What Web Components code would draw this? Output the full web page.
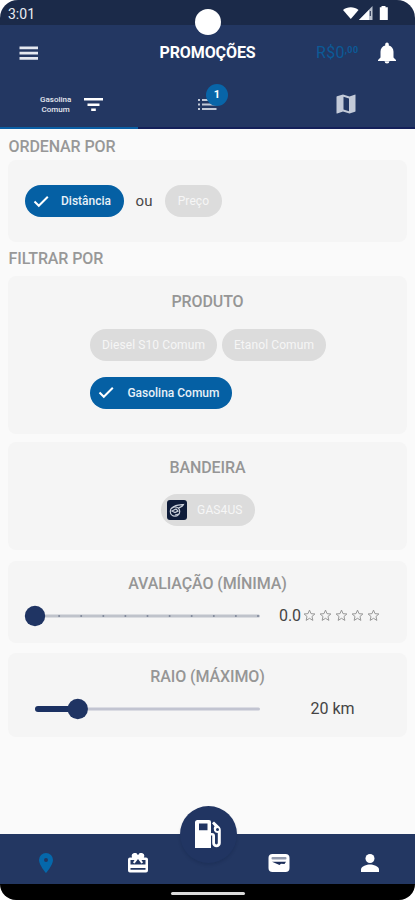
<!DOCTYPE html>
<html lang="pt-BR">
<head>
<meta charset="utf-8">
<title>Promoções</title>
<style>
  html, body { margin: 0; height: 100%; background: #fff; }
  body { font-family: Roboto, sans-serif; }
</style>
</head>
<body>
<x-phone>
  <x-status-bar slot="top"></x-status-bar>
  <x-app-bar slot="top" title="PROMOÇÕES"></x-app-bar>
  <x-tabs slot="top"></x-tabs>

  <x-heading style="--h: 31px; --top: 3px">ORDENAR POR</x-heading>
  <x-card style="--h: 82px">
    <x-row style="--gap: 12px; --pad: 25px 16.5px 0">
      <x-chip checked style="--w: 99px">Distância</x-chip>
      <x-word>ou</x-word>
      <x-chip style="--w: 57px">Preço</x-chip>
    </x-row>
  </x-card>
  <x-heading style="--h: 33px">FILTRAR POR</x-heading>
  <x-card label="PRODUTO" style="--h: 158px; --mt: 1px">
    <x-row style="--gap: 16px 5px; --pad: 17px 74px 0 82px; --wrap: wrap">
      <x-chip style="--w: 127px">Diesel S10 Comum</x-chip>
      <x-chip style="--w: 104px">Etanol Comum</x-chip>
      <x-chip checked style="--w: 142px">Gasolina Comum</x-chip>
    </x-row>
  </x-card>
  <x-card label="BANDEIRA" style="--h: 108px; --mt: 8px">
    <x-row style="--justify: center; --pad: 16px 0 0">
      <x-chip logo style="--w: 94px">GAS4US</x-chip>
    </x-row>
  </x-card>
  <x-card label="AVALIAÇÃO (MÍNIMA)" style="--h: 82px; --mt: 11px; --label-top: 13px">
    <x-slider value="0" steps="10" style="--shift: -2px"><x-rating value="0.0"></x-rating></x-slider>
  </x-card>
  <x-card label="RAIO (MÁXIMO)" style="--h: 84px; --mt: 10px; --label-top: 14px">
    <x-slider value="19" style="--shift: 1px">20 km</x-slider>
  </x-card>

  <x-nav slot="bottom"></x-nav>
</x-phone>

<script>
function define(name, html, setup) {
  const template = document.createElement("template");
  template.innerHTML = html;
  customElements.define(name, class extends HTMLElement {
    constructor() {
      super();
      this._shadowRoot = this.attachShadow({ mode: "open" });
      this._shadowRoot.appendChild(template.content.cloneNode(true));
      if (setup) setup(this, this._shadowRoot);
    }
  });
}

define("x-phone", `
  <style>
    :host {
      display: flex;
      flex-direction: column;
      width: 415px;
      height: 900px;
      overflow: hidden;
      border-radius: 18px 18px 16px 16px;
      background: #fafafa;
    }
    main { flex: 1; min-height: 0; padding: 0 8px; }
  </style>
  <slot name="top"></slot>
  <main><slot></slot></main>
  <slot name="bottom"></slot>
`);

define("x-status-bar", `
  <style>
    :host {
      display: flex;
      flex: none;
      align-items: center;
      justify-content: space-between;
      position: relative;
      height: 25px;
      box-sizing: border-box;
      padding: 2px 26px 0 8px;
      background: #1b2a49;
      color: #e9ecf2;
      font-size: 14px;
    }
    i {
      position: absolute;
      left: 195px;
      top: 9px;
      width: 26px;
      height: 26px;
      border-radius: 50%;
      background: #fff;
    }
    svg { display: block; }
  </style>
  <span>3:01</span>
  <i></i>
  <svg width="47" height="16" viewBox="0 0 47 16">
    <path fill="#fff" d="M1 4C5 .3 12.500.3 16.500 4L8.800 13z"/>
    <path fill="#bcc3d0" d="M30.500 0v14H17z"/>
    <path fill="#fff" d="M27 4v10H17z"/>
    <path stroke="#1b2a49" stroke-width="1" d="M28.300 5v5"/>
    <path fill="#fff" d="M39.500 0h4v1.300h2.300V14h-8V1.300h1.700z"/>
  </svg>
`);

define("x-app-bar", `
  <style>
    :host {
      display: grid;
      flex: none;
      grid-template-columns: 108px 1fr 108px;
      align-items: center;
      height: 55px;
      background: #233762;
      color: #fff;
    }
    svg { display: block; fill: currentColor; }
    .menu { margin-left: 19px; fill: #e4e8f0; }
    h1 {
      margin: 0;
      text-align: center;
      font-size: 16px;
      font-weight: 700;
      letter-spacing: -.1px;
    }
    .end { display: flex; align-items: center; margin-left: 9px; gap: 18px; }
    .money { display: flex; width: 43px; color: #0c5a97; font-size: 16px; letter-spacing: .3px; }
    sup { font-size: 9px; line-height: 15px; font-weight: 700; letter-spacing: .4px; }
  </style>
  <svg class="menu" width="20" height="16" viewBox="0 0 20 16"><path d="M.5 1.500h18.500v2.800H.5zM.5 6.700h18.500v2.800H.5zM.5 12h18.500v2.800H.5z"/></svg>
  <h1></h1>
  <div class="end">
    <div class="money">R$0<sup>,00</sup></div>
    <svg width="20" height="22" viewBox="0 0 20 22"><path d="M10 21.500a2.500 2.500 0 0 0 2.500-2.200h-5a2.500 2.500 0 0 0 2.500 2.200zM16.500 15.500V9.800c0-3.200-1.800-5.500-4.700-6.300V2.300a1.800 1.800 0 0 0-3.600 0v1.200C5.300 4.300 3.500 6.600 3.500 9.800v5.700L1 18v1h18v-1z"/></svg>
  </div>
`, (host, root) => {
  root.querySelector("h1").textContent = host.getAttribute("title");
});

define("x-tabs", `
  <style>
    :host {
      display: grid;
      flex: none;
      grid-template-columns: repeat(3, 1fr);
      height: 49px;
      background: #233762;
    }
    div {
      display: flex;
      align-items: center;
      justify-content: center;
      box-sizing: border-box;
      border-bottom: 2px solid #14205a;
    }
    .on { border-color: #0a5fa5; gap: 13px; padding: 2px 0 0 5px; }
    svg { display: block; }
    small {
      color: #e3e7ef;
      font-size: 8px;
      line-height: 10px;
      font-weight: 500;
      text-align: center;
    }
    .list { position: relative; top: 1px; }
    b {
      position: absolute;
      left: 8px;
      top: -14px;
      width: 22px;
      height: 22px;
      border-radius: 50%;
      background: #0865a8;
      color: #fff;
      font-size: 11px;
      line-height: 22px;
      text-align: center;
    }
  </style>
  <div class="on">
    <small>Gasolina<br>Comum</small>
    <svg width="19" height="15" viewBox="0 0 19 15"><path fill="#fff" d="M0 1h19v2.400H0zM3.500 6.500h12v2.400h-12zM7.200 11.500h4.600V14H7.200z"/></svg>
  </div>
  <div>
    <span class="list">
      <svg width="19" height="13" viewBox="0 0 19 13"><path fill="#c3cad8" d="M0 1h2v2H0zM0 5.500h2v2H0zM0 10h2v2H0zM4 1h14.500v2H4zM4 5.500h14.500v2H4zM4 10h14.500v2H4z"/></svg>
      <b>1</b>
    </span>
  </div>
  <div>
    <svg width="20" height="20" viewBox="0 0 20 20"><path fill="#c3cad8" fill-rule="evenodd" d="M19.300.500 13.500 2.500 7 .500 1 2.300Q.5 2.500.5 3v16q0 .7.700.5L7 17.500l6.500 2 5.500-1.800q.5-.2.500-.7V1q0-.5-.2-.5zM7.500 2.700l5.500 1.800v12.800l-5.500-1.800z"/></svg>
  </div>
`);

define("x-heading", `
  <style>
    :host {
      display: flex;
      align-items: center;
      box-sizing: border-box;
      height: var(--h, 34px);
      padding: var(--top, 0) 0 0 .5px;
      color: #989898;
      font-size: 16px;
      font-weight: 500;
      letter-spacing: -.1px;
    }
  </style>
  <slot></slot>
`);

define("x-card", `
  <style>
    :host {
      display: block;
      box-sizing: border-box;
      height: var(--h);
      margin-top: var(--mt, 0);
      border-radius: 8px;
      background: #f5f5f5;
    }
    h2 {
      margin: 0;
      padding-top: var(--label-top, 15.5px);
      color: #969696;
      font-size: 16px;
      line-height: 20px;
      font-weight: 500;
      letter-spacing: -.1px;
      text-align: center;
    }
    h2:empty { display: none; }
  </style>
  <h2></h2>
  <slot></slot>
`, (host, root) => {
  root.querySelector("h2").textContent = host.getAttribute("label") || "";
});

define("x-row", `
  <style>
    :host {
      display: flex;
      flex-wrap: var(--wrap, nowrap);
      align-items: center;
      justify-content: var(--justify, flex-start);
      gap: var(--gap, 0);
      padding: var(--pad, 0);
    }
  </style>
  <slot></slot>
`);

define("x-word", `
  <style>
    :host { color: #484848; font-size: 15px; letter-spacing: .3px; }
  </style>
  <slot></slot>
`);

define("x-chip", `
  <style>
    :host {
      display: flex;
      flex: none;
      align-items: center;
      justify-content: center;
      box-sizing: border-box;
      width: var(--w);
      height: 32px;
      border-radius: 16px;
      background: #dcdcdc;
      color: #f6f6f6;
      font-size: 12px;
      letter-spacing: .1px;
      white-space: nowrap;
    }
    :host([checked]) {
      justify-content: space-between;
      padding: 0 12.5px 0 8px;
      background: #0560a4;
      color: #e8f1f8;
      font-weight: 500;
      letter-spacing: 0;
    }
    :host([logo]) { justify-content: space-between; padding: 0 12px 0 6px; }
    svg { display: none; }
    :host([checked]) .check, :host([logo]) .logo { display: block; }
  </style>
  <svg class="check" width="16" height="13" viewBox="0 0 16 13"><path fill="none" stroke="#fff" stroke-width="2" d="M1.500 6.500 5.800 10.800 14.800 1.800"/></svg>
  <svg class="logo" width="20" height="20" viewBox="0 0 20 20">
    <rect width="20" height="20" rx="3" fill="#0e1c3a"/>
    <g fill="none" stroke="#c9cfda" stroke-width="1.200">
      <circle cx="8" cy="11.500" r="4.700"/>
      <path d="M4 9c3-4 7-4 12.500-4.500-1 2.500-3 2.200-5 3.500M8 15l4-1M5 11l4-2 2 2-3 1.500z"/>
    </g>
  </svg>
  <span><slot></slot></span>
`);

define("x-slider", `
  <style>
    :host {
      display: grid;
      grid-template-columns: 225px 1fr;
      align-items: center;
      column-gap: 12px;
      height: 43px;
      padding: 0 16px 0 27px;
      color: #444;
      font-size: 16px;
    }
    svg { display: block; overflow: visible; }
    span {
      display: flex;
      justify-content: center;
      padding-left: calc(8px + var(--shift, 0px));
      padding-right: calc(8px - var(--shift, 0px));
    }
  </style>
  <svg width="225" height="22" viewBox="0 0 225 22"></svg>
  <span><slot></slot></span>
`, (host, root) => {
  const x = Number(host.getAttribute("value")) * 2.25;
  const steps = Number(host.getAttribute("steps"));
  let dots = "";
  for (let i = 1; i <= steps; i++) {
    dots += `<circle cx="${2 + i * 221 / steps}" cy="11" r="1" fill="#7d8698"/>`;
  }
  root.querySelector("svg").innerHTML = `
    <path d="M1.500 11h222" stroke="${steps ? "#bfc3cb" : "#c2c4d1"}" stroke-width="3" stroke-linecap="round"/>
    ${dots}
    ${x ? `<path d="M3 11H${x}" stroke="#1b3162" stroke-width="6" stroke-linecap="round"/>` : ""}
    <circle cx="${x}" cy="11" r="10.200" fill="#1f3463"/>`;
});

define("x-rating", `
  <style>
    :host { display: flex; flex: none; align-items: center; }
    div { display: flex; gap: 3px; margin-left: 2px; }
    svg { display: block; fill: none; stroke: #959595; stroke-width: .9; }
  </style>
  <span></span>
  <div></div>
`, (host, root) => {
  root.querySelector("span").textContent = host.getAttribute("value");
  root.querySelector("div").innerHTML = `
    <svg width="13" height="13" viewBox="0 0 12 12"><path d="M6 1l1.400 3.300 3.600.3-2.700 2.300.8 3.600L6 8.600l-3.100 1.900.8-3.600L1 4.600l3.600-.3z"/></svg>`.repeat(5);
});

define("x-nav", `
  <style>
    :host { display: block; flex: none; position: relative; }
    nav {
      display: grid;
      grid-template-columns: 92px 91px 1fr 91px 91px;
      place-items: center;
      height: 50px;
      box-sizing: border-box;
      padding-top: 7px;
      background: #233762;
    }
    svg { display: block; fill: #fff; }
    .fab {
      display: flex;
      align-items: center;
      justify-content: center;
      position: absolute;
      left: 180px;
      top: -28px;
      width: 57px;
      height: 57px;
      box-sizing: border-box;
      padding: 0 1px 2px 0;
      border-radius: 50%;
      background: #213562;
      box-shadow: 0 2px 3px rgba(10, 20, 50, .15);
    }
    .home {
      display: flex;
      justify-content: center;
      height: 16px;
      background: #000;
    }
    .home i { width: 74px; height: 3px; margin-top: 8px; border-radius: 2px; background: #dadada; }
  </style>
  <nav>
    <svg width="16" height="20" viewBox="0 0 16 20"><path style="fill:#0568ab" fill-rule="evenodd" d="M8 0a7 7 0 0 0-7 7c0 5 7 13 7 13s7-8 7-13a7 7 0 0 0-7-7zm0 5a2 2 0 1 1 0 4 2 2 0 0 1 0-4z"/></svg>
    <svg width="22" height="20" viewBox="0 0 22 20"><path fill-rule="evenodd" d="M19 4.500h-2.200A3 3 0 0 0 11.500 1.500L11 2.200l-.5-.7A3 3 0 0 0 5.200 4.500H3a2 2 0 0 0-2 2V17.500a2 2 0 0 0 2 2h16a2 2 0 0 0 2-2v-11a2 2 0 0 0-2-2zM3.500 7h4L6 9.400 7.600 10.600 11 6l3.400 4.600L16 9.400 14.500 7h4v4.500h-15zM3.500 15h15v1.700h-15z"/></svg>
    <span></span>
    <svg width="22" height="18" viewBox="0 0 22 18"><rect x=".5" width="21" height="18" rx="4"/><rect x="3.500" y="3" width="15" height="2.500" rx="1" fill="#929aad"/><path fill="#1b2d59" d="M4 7.800h14L16.500 10 13 9.800 11.500 11z"/></svg>
    <svg width="20" height="18" viewBox="0 0 20 18"><circle cx="10" cy="4.500" r="4.500"/><path d="M1 18v-2.500C1 12 7 10.500 10 10.500s9 1.500 9 5V18z"/></svg>
  </nav>
  <div class="home"><i></i></div>
  <div class="fab">
    <svg width="28" height="30" viewBox="0 0 28 30"><path fill-rule="evenodd" d="M3.500 1H15a2 2 0 0 1 2 2v11h1a3 3 0 0 1 3 3v7a1.400 1.400 0 0 0 2.800 0V14a4.200 4.200 0 0 1-3.300-6.800L18 4.300 20 2.500l5.500 5.300Q26.800 9 26.800 11v13a4.300 4.300 0 0 1-8.600 0v-7.500H17V29H1V3.500A2.500 2.500 0 0 1 3.500 1zM5 4.500v6.700h8.500V4.500zM23.500 9a1.500 1.500 0 1 0 0 3 1.500 1.500 0 0 0 0-3z"/></svg>
  </div>
`);
</script>
</body>
</html>
